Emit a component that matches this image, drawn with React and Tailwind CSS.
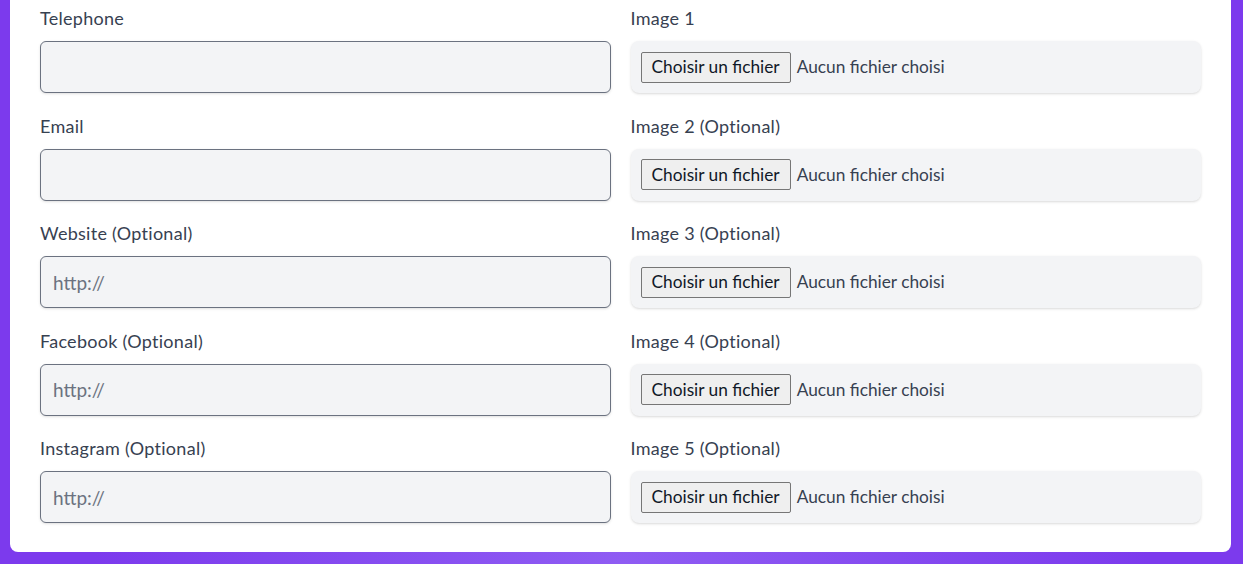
import React from "react";

const left = [
  { label: "Telephone", ph: "" },
  { label: "Email", ph: "" },
  { label: "Website (Optional)", ph: "http://" },
  { label: "Facebook (Optional)", ph: "http://" },
  { label: "Instagram (Optional)", ph: "http://" },
];
const right = ["Image 1", "Image 2 (Optional)", "Image 3 (Optional)", "Image 4 (Optional)", "Image 5 (Optional)"];

export default function App() {
  return (
    <div
      className="min-h-[564px] w-full pl-[10px] pr-[12px] pb-[12px] bg-[radial-gradient(ellipse_at_50%_100%,#8f5cf3_0%,#7c3aed_60%)]"
      style={{ fontFamily: "Lato, 'Noto Sans', sans-serif" }}
    >
      <div className="bg-white rounded-b-lg px-[30px] pt-[6px] pb-[29px] grid grid-cols-2 gap-x-5 gap-y-[20.5px]">
        {left.map((l, i) => (
          <React.Fragment key={i}>
            <div className="flex flex-col">
              <label className="h-6 leading-6 text-[18px] tracking-[0.28px] text-[#374151] mb-[11px]">{l.label}</label>
              <input
                type="text"
                placeholder={l.ph}
                className="h-[52px] w-full rounded-md border border-[#6b7280] bg-[#f3f4f6] shadow-sm px-3 text-[19px] text-[#374151] placeholder:text-[#6b7280] outline-none"
              />
            </div>
            <div className="flex flex-col">
              <label className="h-6 leading-6 text-[18px] tracking-[0.28px] text-[#374151] mb-[11px]">{right[i]}</label>
              <div className="h-[52px] w-full rounded-lg bg-[#f3f4f6] shadow-[0_1px_3px_0_rgb(0_0_0/0.12),0_1px_2px_-1px_rgb(0_0_0/0.1)] p-[10px] flex items-center">
                <span className="h-[31px] px-[10px] flex items-center border border-[#767676] rounded-[2px] bg-[#efefef] text-[17.3px] text-[#111827]">
                  Choisir un fichier
                </span>
                <span className="ml-[6px] text-[17.3px] text-[#374151]">Aucun fichier choisi</span>
              </div>
            </div>
          </React.Fragment>
        ))}
      </div>
    </div>
  );
}
